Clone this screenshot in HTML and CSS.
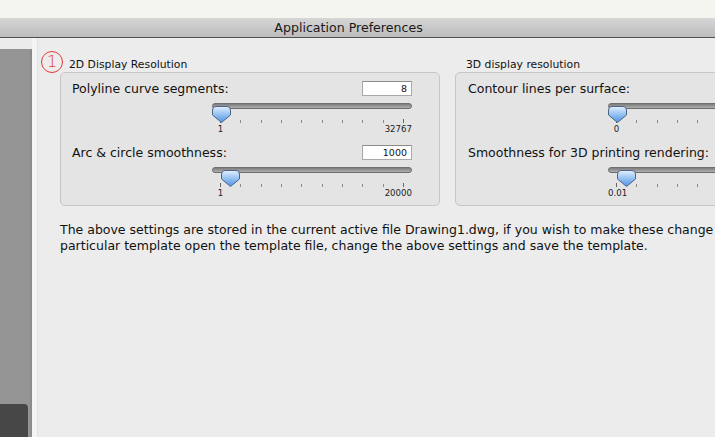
FILE: index.html
```html
<!DOCTYPE html>
<html>
<head>
<meta charset="utf-8">
<title>Application Preferences</title>
<link rel="stylesheet" href="styles.css">
</head>
<body>
<div class="top"></div>
<div class="titlebar">Application Preferences</div>
<div class="window">
  <div class="sidebar"><div class="dock"></div></div>
  <div class="divider"></div>
  <div class="main">
    <div class="groups">
      <section class="section s2d">
        <div class="marker">1</div>
        <div class="legend">2D Display Resolution</div>
        <div class="box">
          <div class="row">
            <div class="head"><span>Polyline curve segments:</span><span class="field">8</span></div>
            <div class="slider">
              <div class="track"></div>
              <svg class="thumb" style="left:0px" width="19" height="17" viewBox="0 0 19 17"><defs><linearGradient id="tg1" x1="0" y1="0" x2="0" y2="1"><stop offset="0" stop-color="#e3f0fd"/><stop offset="0.45" stop-color="#9cc6f4"/><stop offset="1" stop-color="#4d94e6"/></linearGradient></defs><path d="M4,0.5 H15 Q18.5,0.5 18.5,4 V9 L9.5,16.5 L0.5,9 V4 Q0.5,0.5 4,0.5 Z" fill="url(#tg1)" stroke="#4f6583"/></svg>
              <div class="ticks"><i class="long"></i><i></i><i></i><i></i><i></i><i></i><i></i><i></i><i></i><i class="long"></i></div>
              <div class="labels"><span class="min">1</span><span class="max">32767</span></div>
            </div>
          </div>
          <div class="row">
            <div class="head"><span>Arc &amp; circle smoothness:</span><span class="field">1000</span></div>
            <div class="slider">
              <div class="track"></div>
              <svg class="thumb" style="left:9px" width="19" height="17" viewBox="0 0 19 17"><defs><linearGradient id="tg2" x1="0" y1="0" x2="0" y2="1"><stop offset="0" stop-color="#e3f0fd"/><stop offset="0.45" stop-color="#9cc6f4"/><stop offset="1" stop-color="#4d94e6"/></linearGradient></defs><path d="M4,0.5 H15 Q18.5,0.5 18.5,4 V9 L9.5,16.5 L0.5,9 V4 Q0.5,0.5 4,0.5 Z" fill="url(#tg2)" stroke="#4f6583"/></svg>
              <div class="ticks"><i class="long"></i><i></i><i></i><i></i><i></i><i></i><i></i><i></i><i></i><i class="long"></i></div>
              <div class="labels"><span class="min">1</span><span class="max">20000</span></div>
            </div>
          </div>
        </div>
      </section>
      <section class="section s3d">
        <div class="legend">3D display resolution</div>
        <div class="box">
          <div class="row">
            <div class="head"><span>Contour lines per surface:</span></div>
            <div class="slider">
              <div class="track"></div>
              <svg class="thumb" style="left:0px" width="19" height="17" viewBox="0 0 19 17"><defs><linearGradient id="tg3" x1="0" y1="0" x2="0" y2="1"><stop offset="0" stop-color="#e3f0fd"/><stop offset="0.45" stop-color="#9cc6f4"/><stop offset="1" stop-color="#4d94e6"/></linearGradient></defs><path d="M4,0.5 H15 Q18.5,0.5 18.5,4 V9 L9.5,16.5 L0.5,9 V4 Q0.5,0.5 4,0.5 Z" fill="url(#tg3)" stroke="#4f6583"/></svg>
              <div class="ticks"><i class="long"></i><i></i><i></i><i></i><i></i><i></i><i></i><i></i><i></i><i class="long"></i></div>
              <div class="labels"><span class="min">0</span></div>
            </div>
          </div>
          <div class="row">
            <div class="head"><span>Smoothness for 3D printing rendering:</span></div>
            <div class="slider">
              <div class="track"></div>
              <svg class="thumb" style="left:9px" width="19" height="17" viewBox="0 0 19 17"><defs><linearGradient id="tg4" x1="0" y1="0" x2="0" y2="1"><stop offset="0" stop-color="#e3f0fd"/><stop offset="0.45" stop-color="#9cc6f4"/><stop offset="1" stop-color="#4d94e6"/></linearGradient></defs><path d="M4,0.5 H15 Q18.5,0.5 18.5,4 V9 L9.5,16.5 L0.5,9 V4 Q0.5,0.5 4,0.5 Z" fill="url(#tg4)" stroke="#4f6583"/></svg>
              <div class="ticks"><i class="long"></i><i></i><i></i><i></i><i></i><i></i><i></i><i></i><i></i><i class="long"></i></div>
              <div class="labels"><span class="min">0.01</span></div>
            </div>
          </div>
        </div>
      </section>
    </div>
    <p class="note">The above settings are stored in the current active file Drawing1.dwg, if you wish to make these change<br>particular template open the template file, change the above settings and save the template.</p>
  </div>
</div>
</body>
</html>
```

FILE: styles.css
```css
html, body {
  margin: 0;
  padding: 0;
}
body {
  width: 715px;
  height: 437px;
  overflow: hidden;
  background: #f5f5ef;
  font-family: "DejaVu Sans", "Liberation Sans", sans-serif;
  color: #111;
}
.top {
  height: 18px;
}
.titlebar {
  height: 19px;
  line-height: 19px;
  border-bottom: 1px solid #4f4f4f;
  background: linear-gradient(#d6d6d6, #bcbcbc);
  text-align: center;
  padding-right: 18px;
  font-size: 12.6px;
  color: #1a1a1a;
}
.window {
  display: flex;
  height: 399px;
  background: #ececec;
}
.sidebar {
  width: 30px;
  margin-top: 11px;
  background: #959595;
  border-right: 2px solid #8b8b8b;
  display: flex;
  flex-direction: column;
  justify-content: flex-end;
}
.dock {
  width: 28px;
  height: 33px;
  background: #474747;
  border-top-right-radius: 4px;
}
.divider {
  width: 5px;
  background: #f4f4f4;
  border-right: 1px solid #e2e2e2;
}
.main {
  flex: 1;
  padding: 20px 0 0 22px;
  overflow: hidden;
  white-space: nowrap;
}
.groups {
  display: flex;
  gap: 15px;
}
.section {
  position: relative;
  flex: none;
}
.s2d {
  width: 380px;
}
.s3d {
  width: 380px;
}
.marker {
  position: absolute;
  left: -19px;
  top: -7px;
  width: 20px;
  height: 20px;
  border: 1.3px solid #e23a3a;
  border-radius: 50%;
  color: #e23a3a;
  font-size: 16px;
  line-height: 20px;
  text-align: center;
  font-family: "DejaVu Sans", sans-serif;
  font-weight: 300;
}
.legend {
  height: 14px;
  line-height: 14px;
  padding-left: 9px;
  font-size: 10.8px;
}
.s3d .legend {
  padding-left: 11px;
}
.box {
  height: 124px;
  border: 1px solid #c6c6c6;
  border-radius: 5px;
  background: #e4e4e4;
  padding: 8px 27px 0 11px;
}
.s3d .box {
  padding-left: 12px;
}
.row {
  height: 64px;
}
.head {
  display: flex;
  justify-content: space-between;
  align-items: center;
  height: 15px;
  font-size: 12.5px;
}
.field {
  width: 44px;
  height: 13px;
  line-height: 13px;
  background: #fff;
  border: 1px solid #a9a9a9;
  border-top-color: #8c8c8c;
  text-align: right;
  padding-right: 4px;
  font-size: 9.5px;
}
.slider {
  position: relative;
  margin-left: 140px;
  width: 200px;
  height: 49px;
}
.track {
  margin-top: 7px;
  height: 4px;
  border: 1px solid #6e6e6e;
  border-radius: 3px;
  background: linear-gradient(#7c7c7c, #b0b0b0);
}
.thumb {
  position: absolute;
  top: 3px;
}
.ticks {
  display: flex;
  justify-content: space-between;
  padding: 0 8px 0 8px;
  margin-top: 10px;
  height: 5px;
}
.ticks i {
  width: 1px;
  height: 3px;
  margin-top: 1px;
  background: #8a8a8a;
}
.ticks i.long {
  height: 4px;
  margin-top: 0;
  background: #666;
}
.labels {
  display: flex;
  justify-content: space-between;
  margin-top: 1px;
  font-size: 8.6px;
  line-height: 9px;
  color: #222;
}
.min {
  width: 17px;
  text-align: center;
}
.max {
  text-align: right;
}
.note {
  margin: 16px 0 0 0;
  font-size: 12.5px;
  line-height: 16px;
  color: #111;
}
```
